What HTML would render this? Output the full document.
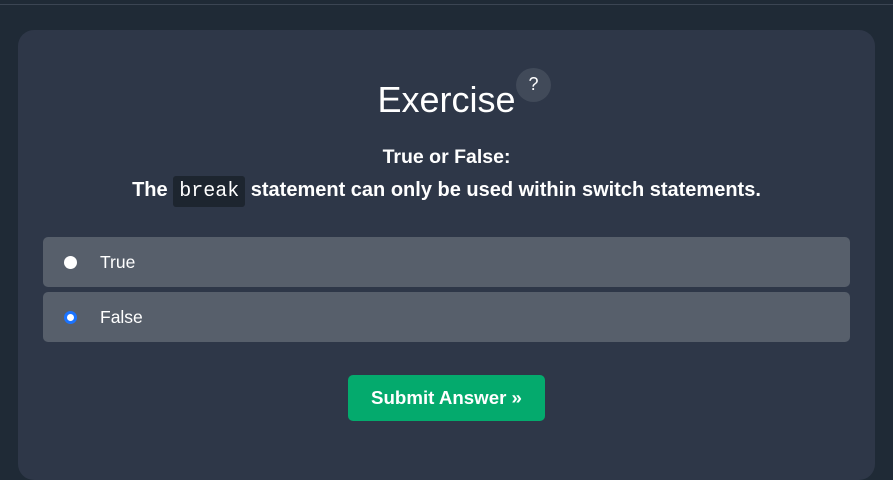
<!DOCTYPE html>
<html><head><style>
html,body{margin:0;padding:0;width:893px;height:467px;overflow:hidden;background:#1f2a36;font-family:"Liberation Sans",sans-serif;color:#fff}
.line{position:absolute;left:0;top:4px;width:893px;height:1px;background:#3b4553}
.card{position:absolute;left:18px;top:30px;width:857px;height:450px;background:#2e3748;border-radius:16px}
h1{position:absolute;left:0;width:893px;top:78px;margin:0;text-align:center;font-weight:normal;font-size:36px;line-height:44px}
.q{position:absolute;left:516px;top:68px;width:35px;height:34px;border-radius:50%;background:#414a59;font-size:18px;text-align:center;line-height:32px}
.t{position:absolute;left:0;width:893px;text-align:center;font-weight:bold;font-size:19.5px}
code{font-family:"Liberation Mono",monospace;font-weight:normal;background:#1d252f;padding:4px 6px;border-radius:3px;font-size:20px}
.opt{position:absolute;left:43px;width:807px;height:50px;background:#575f6b;border-radius:5px;font-size:17.5px}
.opt span{position:absolute;left:57px;top:15px}
.r{position:absolute;left:21px;top:19px;width:13px;height:13px;border-radius:50%;background:#fff;box-sizing:border-box}
.r.s{border:3px solid #1a73ff;background:#fff}
.btn{position:absolute;left:348px;top:375px;width:197px;height:46px;background:#04aa6d;border-radius:5px;text-align:center;line-height:46px;font-weight:bold;font-size:18.7px}
</style></head><body>
<div class="line"></div>
<div class="card"></div>
<h1>Exercise</h1>
<div class="q">?</div>
<div class="t" style="top:146px">True or False:</div>
<div class="t" style="top:179px;font-size:20px">The <code>break</code> statement can only be used within switch statements.</div>
<div class="opt" style="top:237px"><div class="r"></div><span>True</span></div>
<div class="opt" style="top:292px"><div class="r s"></div><span>False</span></div>
<div class="btn">Submit Answer »</div>
</body></html>
